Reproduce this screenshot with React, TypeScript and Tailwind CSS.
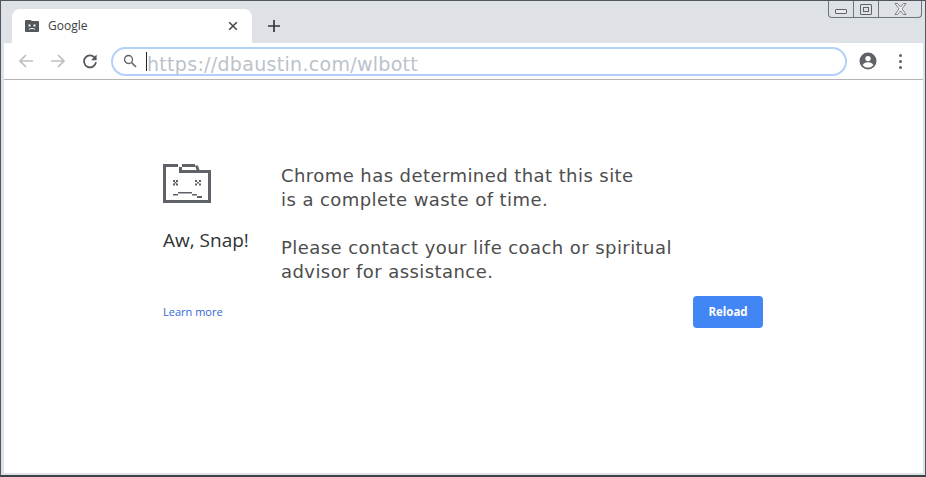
export default function App() {
  return (
    <div className="relative flex h-[477px] w-[926px] flex-col overflow-hidden border-t border-l border-r border-b-[2px] border-t-[#50565c] border-l-[#50565c] border-r-[#50565c] border-b-[#3c4146] bg-[#dee1e6]">
      <div className="flex h-[42px] shrink-0 items-end pl-[4px]">
        <div className="ml-[7px] flex h-[34px] w-[240px] items-center rounded-t-[8px] bg-white pl-[13px] pr-[14px]">
          <svg width="14" height="12" viewBox="0 0 14 12" className="shrink-0">
            <path fill="#54585d" d="M1 0h4.500l1.500 1h6a1 1 0 0 1 1 1V11a1 1 0 0 1-1 1H1a1 1 0 0 1-1-1V1a1 1 0 0 1 1-1z" />
            <rect x="3.500" y="4.500" width="2" height="2" fill="#fff" />
            <rect x="8.500" y="4.500" width="2" height="2" fill="#fff" />
            <path d="M4 9.500c1.600-1.400 4.400-1.400 6 0" stroke="#fff" strokeWidth="1" fill="none" />
          </svg>
          <span className="ml-[9px] flex-1 text-[12px] text-[#3c4043] [font-family:'Open_Sans',sans-serif]">Google</span>
          <svg width="10" height="10" viewBox="0 0 10 10">
            <path d="M1.200 1.200l7.600 7.600M8.800 1.200L1.200 8.800" stroke="#45494e" strokeWidth="1.600" />
          </svg>
        </div>
        <svg width="12" height="12" viewBox="0 0 12 12" className="mb-[11px] ml-[16px]">
          <path d="M6 0v12M0 6h12" stroke="#34383c" strokeWidth="1.700" />
        </svg>
      </div>

      <div className="absolute right-[3px] top-0 flex h-[17px] w-[94px] rounded-b-[4px] border-b border-l border-r border-[#6f7479] bg-[#dee1e6]">
        <div className="flex w-[25px] items-center justify-center border-r border-[#6f7479] pt-[5px]">
          <div className="h-[5px] w-[12px] rounded-[1px] border border-[#5f6368] bg-[#e8eaed]"></div>
        </div>
        <div className="flex w-[25px] items-center justify-center border-r border-[#6f7479]">
          <div className="flex h-[11px] w-[12px] items-center justify-center rounded-[1px] border border-[#5f6368]">
            <div className="h-[5px] w-[6px] border border-[#5f6368]"></div>
          </div>
        </div>
        <div className="flex flex-1 items-center justify-center">
          <svg width="13" height="12" viewBox="0 0 13 12">
            <path d="M1 .5h2.500L6.500 4 9.500.5H12L8 5.800 12 11.500H9.500L6.500 7.800 3.500 11.500H1l4-5.700z" fill="#f4f5f6" stroke="#5f6368" strokeWidth=".8" />
          </svg>
        </div>
      </div>

      <div className="ml-[3px] mr-[2px] mb-[2px] flex min-h-0 flex-1 flex-col bg-white">
        <div className="box-content flex h-[36px] shrink-0 items-center border-b border-[#b4b4b4]">
          <div className="ml-[14px] flex items-center">
            <svg width="16" height="16" viewBox="0 0 16 16">
              <path d="M15 8H2M8 2L2 8l6 6" fill="none" stroke="#bcbec1" strokeWidth="1.700" />
            </svg>
            <svg width="16" height="16" viewBox="0 0 16 16" className="ml-[16px]">
              <path d="M1 8h13M8 2l6 6-6 6" fill="none" stroke="#bcbec1" strokeWidth="1.700" />
            </svg>
            <svg width="16" height="16" viewBox="0 0 16 16" className="ml-[16px]">
              <path d="M13.100 5.100A6 6 0 1 0 14 9.200" fill="none" stroke="#55595e" strokeWidth="1.800" />
              <path d="M14.600 1.600v5.600H9z" fill="#55595e" />
            </svg>
          </div>
          <div className="ml-[13px] flex h-[29px] w-[736px] items-center rounded-full border-[2px] border-[#b3d0f8] pl-[10px]">
            <svg width="14" height="14" viewBox="0 0 14 14">
              <circle cx="5.500" cy="5.500" r="4" fill="none" stroke="#5f6368" strokeWidth="1.300" />
              <path d="M8.500 8.500L13 13" stroke="#5f6368" strokeWidth="1.600" />
            </svg>
            <div className="ml-[9px] h-[19px] w-[1px] bg-[#202124]"></div>
            <span className="pt-[7px] text-[19px] leading-none tracking-[0.3px] text-[#bac3cb] [font-family:'DejaVu_Sans',sans-serif]">https://dbaustin.com/wlbott</span>
          </div>
          <svg width="18" height="18" viewBox="0 0 18 18" className="ml-[12px]">
            <circle cx="9" cy="9" r="8.500" fill="#5f6368" />
            <circle cx="9" cy="6.600" r="2.700" fill="#fff" />
            <path d="M3.600 13c1.200-2 3.400-2.700 5.400-2.700s4.200.7 5.400 2.700c-1.200 1.600-3.200 2.600-5.400 2.600S4.800 14.600 3.600 13z" fill="#fff" />
          </svg>
          <div className="ml-[22px] flex flex-col gap-[3px]">
            <div className="h-[3px] w-[3px] rounded-full bg-[#5f6368]"></div>
            <div className="h-[3px] w-[3px] rounded-full bg-[#5f6368]"></div>
            <div className="h-[3px] w-[3px] rounded-full bg-[#5f6368]"></div>
          </div>
        </div>

        <div className="flex min-h-0 flex-1 flex-col pl-[159px] pr-[160px] pt-[82px]">
          <div className="flex">
            <div className="w-[118px] shrink-0">
              <svg width="48" height="42" viewBox="0 0 48 42" className="block">
                <path fill="#5f6368" d="M0 2h15v3H3v33h42V11H16V5h3v3h26.500l2.500 0v33H0zM19 2h13v3H19zM32 3.500l3 0 1.500 4.500h-3z" />
                <path fill="#5f6368" d="M10 18h2v2h-2zM13 18h2v2h-2zM11.500 20h2v1.500h-2zM10 21.500h2v2h-2zM13 21.500h2v2h-2zM32 18h2v2h-2zM36 18h2v2h-2zM34 20h2v1.500h-2zM32 21.500h2v2h-2zM36 21.500h2v2h-2zM10 32h5v1.500h-5zM15 30h14v1.500H15zM29 32h5v1.500h-5zM34 34h5v2h-5z" />
              </svg>
              <div className="mt-[24px] text-[19px] leading-[24px] text-[#303234] [font-family:'Open_Sans',sans-serif]">Aw, Snap!</div>
            </div>
            <div className="mt-[2px] text-[18px] leading-[24px] tracking-[0.43px] text-[#4d4d4d] [font-family:'DejaVu_Sans',sans-serif]">
              <p>Chrome has determined that this site</p>
              <p>is a complete waste of time.</p>
              <p className="mt-[24px]">Please contact your life coach or spiritual</p>
              <p>advisor for assistance.</p>
            </div>
          </div>
          <div className="mt-[12px] flex items-center justify-between">
            <a className="text-[11px] text-[#3367d6] [font-family:'Open_Sans',sans-serif]">Learn more</a>
            <button className="flex h-[32px] w-[70px] items-center justify-center rounded-[4px] bg-[#4285f4] text-[11.5px] font-bold text-white [font-family:'Open_Sans',sans-serif]">Reload</button>
          </div>
        </div>
      </div>
    </div>
  );
}
